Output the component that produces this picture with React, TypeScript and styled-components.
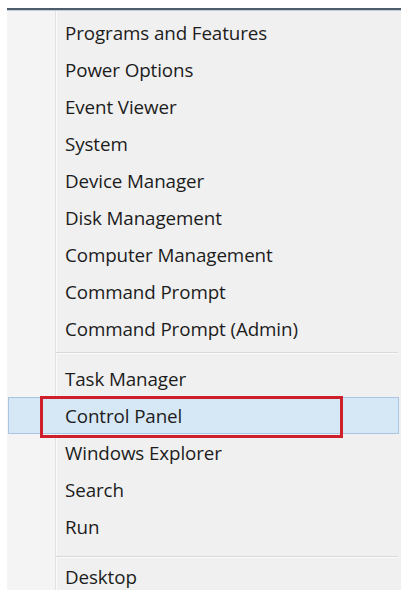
import React from 'react'
import styled, { createGlobalStyle } from 'styled-components'

const GlobalStyle = createGlobalStyle`
  html, body {
    margin: 0;
    padding: 0;
    background: #ffffff;
  }
  body {
    font-family: 'Open Sans', 'Noto Sans', sans-serif;
  }
`

type Item = { label: string; active?: boolean }

const groups: Item[][] = [
  [
    { label: 'Programs and Features' },
    { label: 'Power Options' },
    { label: 'Event Viewer' },
    { label: 'System' },
    { label: 'Device Manager' },
    { label: 'Disk Management' },
    { label: 'Computer Management' },
    { label: 'Command Prompt' },
    { label: 'Command Prompt (Admin)' },
  ],
  [
    { label: 'Task Manager' },
    { label: 'Control Panel', active: true },
    { label: 'Windows Explorer' },
    { label: 'Search' },
    { label: 'Run' },
  ],
  [{ label: 'Desktop' }],
]

// spacing around each separator, top / bottom
const separators = [
  { above: 4.5, below: 6 },
  { above: 11, below: 0 },
]

export default function App() {
  return (
    <Page>
      <GlobalStyle />
      <Menu>
        {groups.map((items, g) => (
          <React.Fragment key={g}>
            {g > 0 && (
              <Separator
                $above={separators[g - 1].above}
                $below={separators[g - 1].below}
              />
            )}
            {items.map((item) => (
              <Row key={item.label} $active={item.active}>
                {item.label}
                {item.active && <Callout />}
              </Row>
            ))}
          </React.Fragment>
        ))}
      </Menu>
    </Page>
  )
}

const Page = styled.div`
  padding: 8px 0 0 7px;
  width: 404px;
  height: 593px;
  box-sizing: border-box;
  overflow: hidden;
`

const Menu = styled.div`
  position: relative;
  width: 394px;
  height: 582px;
  box-sizing: border-box;
  border-top: 2px solid #4c5c6d;
  box-shadow: inset 0 1px 0 #c2ceda;
  padding-top: 4.5px;
  background: linear-gradient(
    to right,
    #f4f4f4 0,
    #f4f4f4 48px,
    #e1e1e1 48px,
    #e1e1e1 49px,
    #fbfbfb 49px,
    #fbfbfb 50px,
    #f0f0f0 50px
  );
`

const Row = styled.div<{ $active?: boolean }>`
  position: relative;
  height: 37px;
  display: flex;
  align-items: center;
  box-sizing: border-box;
  margin: 0 2px 0 1px;
  padding-left: 56px;
  font-size: 18.8px;
  font-weight: 500;
  color: #1c1c1c;
  white-space: nowrap;
  letter-spacing: -0.1px;
  background: ${(p) => (p.$active ? '#d6e7f6' : 'transparent')};
  border: 1px solid ${(p) => (p.$active ? '#a9c5e2' : 'transparent')};
`

const Separator = styled.div<{ $above: number; $below: number }>`
  height: 1px;
  margin: ${(p) => p.$above}px 3px ${(p) => p.$below}px 49px;
  background: #d8d8d8;
  border-bottom: 1px solid #fcfcfc;
`

// red annotation frame drawn over the highlighted entry
const Callout = styled.span`
  position: absolute;
  left: 31px;
  top: -2.5px;
  width: 303px;
  height: 42px;
  box-sizing: border-box;
  border: 3px solid #cf1f2b;
  pointer-events: none;
`
